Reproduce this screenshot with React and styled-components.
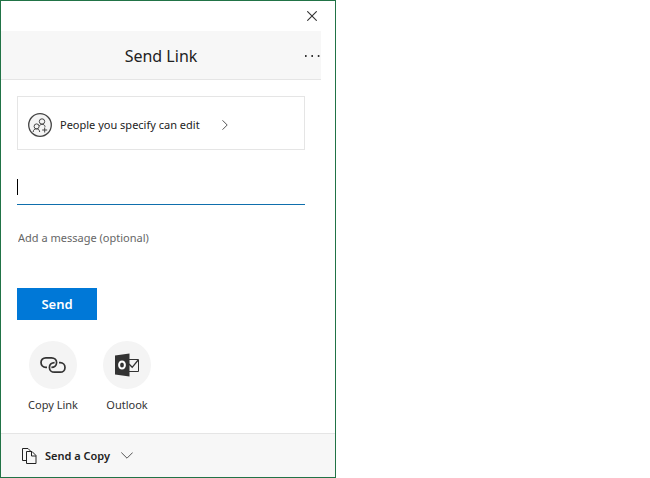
import { useState } from 'react'
import styled, { createGlobalStyle } from 'styled-components'

const App = () => {
  const [recipient, setRecipient] = useState('')
  const [message, setMessage] = useState('')

  return (
    <>
      <GlobalStyle />
      <Dialog role="dialog" aria-labelledby="dialog-title">
        <TopBar>
          <CloseButton type="button" aria-label="Close">
            <CloseIcon />
          </CloseButton>
        </TopBar>
        <Content>
          <Header>
            <Title id="dialog-title">Send Link</Title>
            <MoreButton type="button" aria-label="More options">
              <MoreIcon />
            </MoreButton>
          </Header>
          <Form onSubmit={e => e.preventDefault()}>
            <PermissionButton type="button">
              <PeopleIcon />
              <span>People you specify can edit</span>
              <ChevronRight />
            </PermissionButton>
            <RecipientField>
              <RecipientInput
                aria-label="Recipient"
                value={recipient}
                onChange={e => setRecipient(e.target.value)}
              />
              {recipient === '' && <Caret />}
            </RecipientField>
            <MessageInput
              aria-label="Message"
              placeholder="Add a message (optional)"
              value={message}
              onChange={e => setMessage(e.target.value)}
            />
            <SendButton type="submit">Send</SendButton>
            <ShareList>
              <ShareButton type="button">
                <ShareCircle>
                  <LinkIcon />
                </ShareCircle>
                Copy Link
              </ShareButton>
              <ShareButton type="button">
                <ShareCircle>
                  <OutlookIcon />
                </ShareCircle>
                Outlook
              </ShareButton>
            </ShareList>
          </Form>
        </Content>
        <Footer>
          <CopyButton type="button">
            <CopyIcon />
            <span>Send a Copy</span>
            <ChevronDown />
          </CopyButton>
        </Footer>
      </Dialog>
    </>
  )
}

export default App

const CloseIcon = () => (
  <svg width="10" height="10" viewBox="0 0 10 10" fill="none" stroke="#333" strokeWidth="1.1">
    <path d="M0.3 0.3 9.7 9.7M9.7 0.3 0.3 9.7" />
  </svg>
)

const MoreIcon = () => (
  <svg width="16" height="4" viewBox="0 0 16 4" fill="#333">
    <path d="M0 1h1.6v2H0zM6.4 1H8v2H6.4zM12.8 1h1.6v2h-1.6z" />
  </svg>
)

const PeopleIcon = () => (
  <svg width="24" height="24" viewBox="0 0 24 24" fill="none" stroke="#444">
    <circle cx="12" cy="12" r="11.3" fill="#f4f4f4" strokeWidth="1.3" />
    <circle cx="14" cy="8.5" r="2.7" />
    <circle cx="8.6" cy="13.4" r="2.5" />
    <path d="M5.2 19c0-2 1.4-3.2 3.3-3.2s3 1.2 3.2 3.2M11.4 13.2c.3-1.2 1.3-1.9 2.7-1.9 1.6 0 2.7.8 3 2.5M16.7 14.5v5M14.2 17h5" />
  </svg>
)

const ChevronRight = () => (
  <svg width="6" height="10" viewBox="0 0 6 10" fill="none" stroke="#555">
    <path d="M0.5 0.3 5.2 5 0.5 9.7" />
  </svg>
)

const ChevronDown = () => (
  <svg width="12" height="7" viewBox="0 0 12 7" fill="none" stroke="#555">
    <path d="M0.3 0.5 6 6.2 11.7 0.5" />
  </svg>
)

const LinkIcon = () => (
  <svg width="26" height="18" viewBox="0 0 26 18" fill="none" stroke="#333" strokeWidth="1.7">
    <path d="M7 11.4H5.8C3 11.4 1 9.3 1 6.6 1 3.9 3 1.8 5.8 1.8H11.5C14.5 1.8 16.6 3.9 16.6 6.6 16.6 9.3 14.5 11.4 11.4 11.4" />
    <path d="M19 6.6H20.2C23 6.6 25 8.7 25 11.4 25 14.1 23 16.2 20.2 16.2H14.5C11.5 16.2 9.4 14.1 9.4 11.4 9.4 8.7 11.5 6.6 14.6 6.6" />
  </svg>
)

const OutlookIcon = () => (
  <svg width="24" height="24" viewBox="0 0 24 24" fill="none" stroke="#333">
    <path d="M14 6.5H23.5V18.5H14" />
    <path d="M14 11 17.2 14.3 23.2 7" strokeWidth="1.3" />
    <path d="M0 2.5 14.5 0.5V23.5L0 21.5Z" fill="#333" stroke="none" />
    <ellipse cx="7" cy="12" rx="2.9" ry="3.6" stroke="#fff" strokeWidth="2" />
  </svg>
)

const CopyIcon = () => (
  <svg width="15" height="16" viewBox="0 0 15 16" fill="none" stroke="#222">
    <path d="M4 12.5H0.5V0.5H6L8.5 3" />
    <path d="M4.5 3.5H10L14 7.5V15.5H4.5ZM9.5 3.5V8H14" />
  </svg>
)

const GlobalStyle = createGlobalStyle`
  *,
  *::before,
  *::after {
    box-sizing: border-box;
  }
  body {
    margin: 0;
    background: #fff;
    color: #222;
    font-family: 'Noto Sans', 'Open Sans', sans-serif;
    font-size: 11px;
    line-height: 16px;
  }
  button,
  input {
    font: inherit;
    color: inherit;
  }
  svg {
    display: block;
    flex: none;
  }
`

const Dialog = styled.div`
  width: 100%;
  max-width: 336px;
  border: 1px solid #217346;
  background: #fff;
`

const PlainButton = styled.button`
  display: flex;
  align-items: center;
  padding: 0;
  border: none;
  background: none;
  cursor: pointer;
`

const TopBar = styled.div`
  display: flex;
  justify-content: flex-end;
  height: 30px;
  padding-right: 8px;
`

const CloseButton = styled(PlainButton)`
  justify-content: center;
  width: 30px;
`

const Content = styled.div`
  margin-right: 14px;
`

const Header = styled.header`
  display: grid;
  grid-template-columns: 16px 1fr 16px;
  align-items: center;
  height: 49px;
  padding-top: 2px;
  background: #f7f7f7;
  border-bottom: 1px solid #e5e5e5;
`

const Title = styled.h1`
  grid-column: 2;
  margin: 0;
  font-size: 16px;
  font-weight: 400;
  line-height: 24px;
  text-align: center;
`

const MoreButton = styled(PlainButton)`
  height: 24px;
`

const Form = styled.form`
  display: flex;
  flex-direction: column;
  padding: 16px 16px 20px;
`

const PermissionButton = styled(PlainButton)`
  gap: 8px;
  height: 54px;
  padding: 4px 10px 0;
  border: 1px solid #e5e5e5;

  svg:last-child {
    margin-left: 14px;
  }
`

const RecipientField = styled.div`
  position: relative;
  margin-top: 19px;
`

const RecipientInput = styled.input`
  display: block;
  width: 100%;
  height: 36px;
  padding: 0;
  border: none;
  border-bottom: 1px solid #0f6fad;
  outline: none;
  background: none;
`

const Caret = styled.span`
  position: absolute;
  top: 10px;
  left: 0;
  width: 1px;
  height: 16px;
  background: #000;
  pointer-events: none;
`

const MessageInput = styled.input`
  height: 32px;
  margin: 16px 0 35px;
  padding: 0 1px;
  border: none;
  outline: none;
  background: none;

  &::placeholder {
    color: #666;
    opacity: 1;
  }
`

const SendButton = styled(PlainButton)`
  justify-content: center;
  width: 80px;
  height: 32px;
  background: #0078d7;
  color: #fff;
  font-size: 13px;
  font-weight: 600;
`

const ShareList = styled.div`
  display: flex;
  gap: 2px;
  margin-top: 21px;
`

const ShareButton = styled(PlainButton)`
  flex-direction: column;
  gap: 8px;
  width: 72px;
  color: #333;
`

const ShareCircle = styled.span`
  display: grid;
  place-items: center;
  width: 48px;
  height: 48px;
  border-radius: 50%;
  background: #f4f4f4;
`

const Footer = styled.footer`
  padding: 0 21px;
  background: #f7f7f7;
  border-top: 1px solid #e5e5e5;
`

const CopyButton = styled(PlainButton)`
  gap: 8px;
  height: 43px;
  font-weight: 600;

  svg:last-child {
    margin-left: 3px;
  }
`
